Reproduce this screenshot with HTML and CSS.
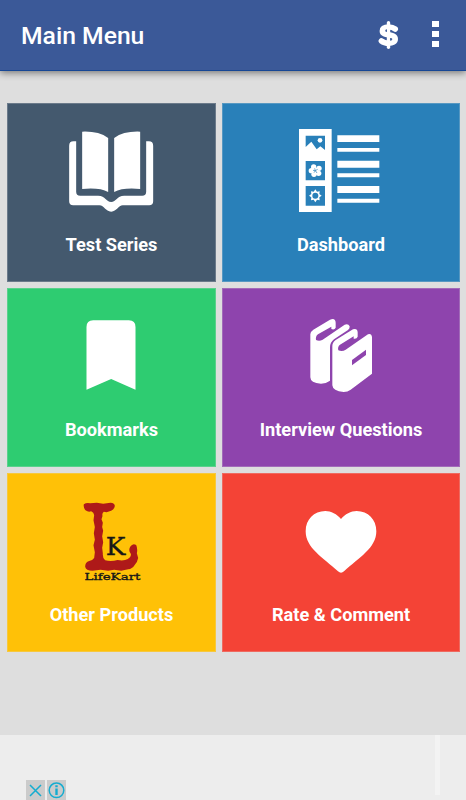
FILE: index.html
```html
<!DOCTYPE html>
<html lang="en">
<head>
    <meta charset="UTF-8">
    <meta name="viewport" content="width=device-width, initial-scale=1.0">
    <title>Main Menu</title>
    <link rel="stylesheet" href="styles.css">
</head>
<body>
    <div class="header">
        <h1>Main Menu</h1>
        <span class="dollar">
            <svg width="22" height="30" viewBox="0 0 22 30">
                <path d="M17.200 9C15.200 7.400 13.200 7 10.800 7C7.200 7 4.400 8.200 4.400 10.900C4.400 16.500 17.200 13.200 17.200 19.100C17.200 21.900 14.400 23.200 10.800 23.200C7.800 23.200 5.400 22.600 3.400 21" fill="none" stroke="#fff" stroke-width="5.600" stroke-linecap="round"/>
                <path d="M10.500 2.700V27.300" stroke="#fff" stroke-width="3.400" stroke-linecap="round"/>
                <path d="M8.300 9.300V11.900M12.900 18.200V20.800" stroke="#3b5998" stroke-width="1"/>
            </svg>
        </span>
        <span class="more"><i></i><i></i><i></i></span>
    </div>

    <div class="menu">
        <div class="tile dark">
            <svg class="icon" viewBox="5.500 1 360 330">
                <path d="M96 51Q145 49 174 70V232Q148 218 96 223ZM270 51Q221 49 192 70V232Q218 218 270 223Z"/>
                <path d="M78 80H70Q57 80 57 93V260Q57 272 69 272H148C162 272 166 291 183 291S204 272 218 272H297Q309 272 309 260V93Q309 80 296 80H288V231Q288 243 276 243H222C200 243 198 262 183 262S166 243 144 243H90Q78 243 78 231Z"/>
            </svg>
            <span>Test Series</span>
        </div>
        <div class="tile blue">
            <svg class="icon" viewBox="3 0 360 330">
                <path d="M57 42H155V291H57ZM172 61H298V81H172ZM172 99H298V110H172ZM172 137H298V158H172ZM172 175H298V187H172ZM172 213H298V234H172ZM172 251H298V263H172Z"/>
                <path class="cut" d="M77 62H135V105L121 94L110 103L94 80L77 96ZM77 138H135V196H77ZM77 213H135V272H77Z"/>
                <circle cx="120" cy="76" r="7"/>
                <circle cx="101" cy="156" r="8"/><circle cx="117" cy="160" r="8"/><circle cx="116" cy="175" r="8"/><circle cx="102" cy="178" r="8"/><circle cx="94" cy="167" r="8"/><circle cx="106" cy="167" r="9"/>
                <path d="M106 167L104 160M106 167L113 163M106 167L111 174M106 167L102 173M106 167L99 166" stroke="#2980b9" stroke-width="2"/>
                <path d="M106 223L111 230L119 229L118 237L125 242L118 247L119 256L111 254L106 262L101 254L93 256L94 247L87 242L94 237L93 229L101 230Z"/>
                <circle class="cut" cx="106" cy="242" r="9"/>
            </svg>
            <span>Dashboard</span>
        </div>
        <div class="tile green">
            <svg class="icon" viewBox="5.500 1 360 330">
                <path d="M129 62H236Q256 62 256 82V270L183 238L109 270V82Q109 62 129 62Z"/>
            </svg>
            <span>Bookmarks</span>
        </div>
        <div class="tile purple">
            <svg class="icon" viewBox="93 0 360 330">
                <path d="M181 103Q182 94 190 89L240 59Q256 52 257 68V83Q253 91 244 87V80L204 103Q196 109 198 120Q208 125 218 119L284 74Q295 70 299 79Q300 85 294 90L252 118Q240 127 240 142V242Q228 251 213 251Q181 249 181 232Z"/>
                <path d="M247 138Q247 127 257 120L309 88Q322 84 323 97V110Q320 118 311 116V109L270 134Q262 140 265 151Q277 156 287 149L354 103Q364 99 366 111V221L302 269Q293 276 281 276Q248 273 247 256Z"/>
                <path class="cut" d="M306 180L348 149V165L306 196Z"/>
            </svg>
            <span>Interview Questions</span>
        </div>
        <div class="tile yellow">
            <svg class="icon" viewBox="35.500 -15 360 330">
                <path class="logo" d="M131 43Q139 37 150 40L170 38L189 41L211 38Q224 39 224 48Q223 58 213 62L199 67L191 65Q185 69 187 78L184 88L188 98L186 111L189 122L186 139L189 157L186 173L188 190Q187 205 195 211Q213 216 232 210Q251 214 263 207Q276 199 271 190Q264 181 270 170Q278 158 288 165Q293 176 290 190L294 204Q291 219 283 226Q276 237 264 238L243 242L222 239L204 242L181 239L157 242Q137 242 135 230Q135 218 145 214Q157 212 162 204L164 187L160 166L164 149L161 130L164 111L160 91L162 75Q161 67 153 64Q145 68 136 61Q129 52 131 43Z"/>
                <text class="logo-k" x="197" y="194" textLength="59" lengthAdjust="spacingAndGlyphs">K</text>
                <text class="logo-name" x="133" y="270" textLength="168" lengthAdjust="spacingAndGlyphs">LifeKart</text>
            </svg>
            <span>Other Products</span>
        </div>
        <div class="tile red">
            <svg class="icon" viewBox="63 -15 360 330">
                <path d="M243 87C255 72 273 63 290 63C324 63 349 88 349 124C349 174 297 203 252 244Q243 252 234 244C189 203 137 174 137 124C137 88 162 63 196 63C213 63 231 72 243 87Z"/>
            </svg>
            <span>Rate &amp; Comment</span>
        </div>
    </div>

    <!-- Ad banner -->
    <div class="ad">
        <div class="adButtons">
            <svg width="19" height="20" viewBox="0 0 19 20"><path d="M4 5L15 16M15 5L4 16"/></svg>
            <svg width="19" height="20" viewBox="0 0 19 20"><circle cx="9.500" cy="10.300" r="7.300"/><path d="M9.500 8.500V15M9.500 5.300V7.300" stroke-width="2.400"/></svg>
        </div>
        <div class="adLine"></div>
    </div>
</body>
</html>
```
FILE: styles.css
```css
* {
    box-sizing: border-box;
}

body {
    margin: 0;
    height: 800px;
    overflow: hidden;
    display: flex;
    flex-direction: column;
    background: #dedede;
    font-family: Roboto, sans-serif;
    color: #fff;
}

/* Top bar */
.header {
    display: flex;
    align-items: center;
    height: 71px;
    padding: 0 27px 0 21px;
    background: #3b5998;
    border-bottom: 1px solid #174795;
    box-shadow: 0 2px 7px rgba(0, 0, 0, 0.45);
}

.header h1 {
    flex: 1;
    margin: 0;
    font-size: 24.7px;
    font-weight: 500;
}

.dollar {
    height: 30px;
    margin-right: 32px;
}

.dollar svg {
    display: block;
}

.more {
    display: flex;
    flex-direction: column;
    gap: 4px;
    margin: -2px 0 0;
}

.more i {
    width: 7px;
    height: 6px;
    background: #fff;
}

/* Menu tiles */
.menu {
    display: grid;
    grid-template-columns: 209px 238px;
    grid-auto-rows: 179px;
    gap: 6px;
    padding: 32px 6px 0 7px;
    flex: 1;
}

.tile {
    display: flex;
    flex-direction: column;
    align-items: center;
    padding-top: 11px;
    border: 1px solid rgba(222, 222, 222, 0.25);
    font-size: 18.2px;
    font-weight: bold;
    line-height: 22px;
    white-space: nowrap;
}

.tile span {
    margin-top: 9px;
}

.icon {
    width: 120px;
    height: 110px;
    fill: #fff;
}

.dark { background-color: #44596e; }
.blue { background-color: #2980b9; }
.green { background-color: #2ecc71; }
.purple { background-color: #8e44ad; }
.yellow { background-color: #ffc107; }
.red { background-color: #f44336; }

.blue .cut { fill: #2980b9; }
.purple .cut { fill: #8e44ad; }

.logo {
    fill: #ae1919;
}

.logo-k,
.logo-name {
    fill: #171717;
    stroke: #171717;
    stroke-width: 1;
    font-family: "DejaVu Serif", serif;
    font-weight: normal;
}

.logo-k {
    font-size: 72px;
}

.logo-name {
    font-size: 30px;
}

/* Banner at the bottom */
.ad {
    display: flex;
    justify-content: space-between;
    height: 65px;
    padding: 0 26px;
    background: #ededed;
}

.adButtons {
    display: flex;
    align-items: flex-end;
    gap: 2px;
}

.adButtons svg {
    background: #cbcbcb;
    fill: none;
    stroke: #14acd0;
    stroke-width: 1.5;
}

.adLine {
    width: 5px;
    height: 60px;
    background: #f3f3f3;
}
```
